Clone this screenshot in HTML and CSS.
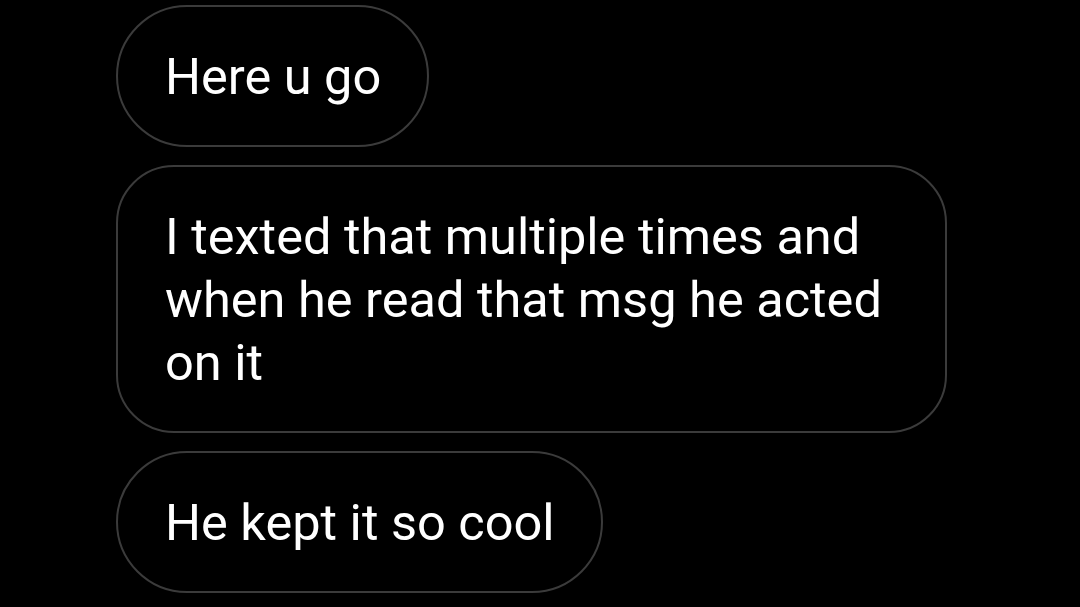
FILE: index.html
```html
<!DOCTYPE html>
<html lang="en">
<head>
  <meta charset="UTF-8">
  <meta name="viewport" content="width=device-width, initial-scale=1.0">
  <title>Messages</title>
  <link rel="stylesheet" href="styles.css">
</head>
<body>
  <div class="thread">
    <div class="bubble pill">Here u go</div>
    <div class="bubble wide">I texted that multiple times and when he read that msg he acted on it</div>
    <div class="bubble pill">He kept it so cool</div>
  </div>
</body>
</html>
```

FILE: styles.css
```css
* {
  margin: 0;
  padding: 0;
  box-sizing: border-box;
}
body {
  background: #000;
  color: #fff;
  font-family: Roboto, "Noto Sans", sans-serif;
  overflow: hidden;
}
.thread {
  display: flex;
  flex-direction: column;
  align-items: flex-start;
  gap: 18px;
  padding: 5px 0 0 116px;
}
.bubble {
  border: 2px solid #3b3b3b;
  font-size: 50.5px;
  line-height: 63px;
  padding: 38px 46px 37px 47px;
}
.pill {
  border-radius: 72px;
}
.wide {
  width: 831px;
  border-radius: 58px;
}
```
